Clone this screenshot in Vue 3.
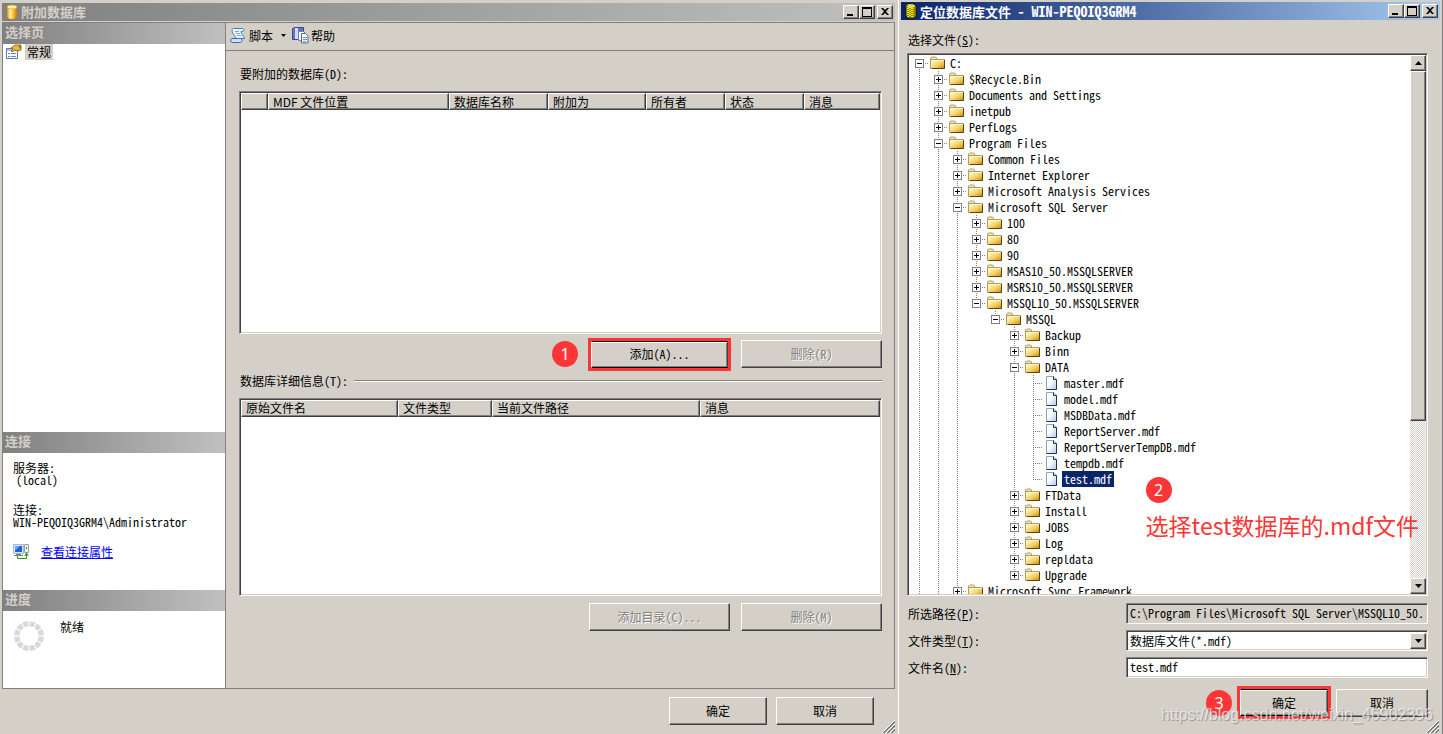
<script setup>
import { ref } from 'vue'

const attachColumns = [
  { label: '', width: 27 },
  { label: 'MDF 文件位置', width: 181, proportional: true },
  { label: '数据库名称', width: 99 },
  { label: '附加为', width: 98 },
  { label: '所有者', width: 79 },
  { label: '状态', width: 79 },
  { label: '消息', width: 76 },
]
const detailColumns = [
  { label: '原始文件名', width: 157 },
  { label: '文件类型', width: 94 },
  { label: '当前文件路径', width: 208 },
  { label: '消息', width: 180 },
]
const share = (cols, col) => (100 * col.width) / cols.reduce((sum, c) => sum + c.width, 0) + '%'

// [level, name, kind]: '+' closed folder, '-' open folder, 'f' file
const entries = [
  [0, 'C:', '-'],
  [1, '$Recycle.Bin', '+'],
  [1, 'Documents and Settings', '+'],
  [1, 'inetpub', '+'],
  [1, 'PerfLogs', '+'],
  [1, 'Program Files', '-'],
  [2, 'Common Files', '+'],
  [2, 'Internet Explorer', '+'],
  [2, 'Microsoft Analysis Services', '+'],
  [2, 'Microsoft SQL Server', '-'],
  [3, '100', '+'],
  [3, '80', '+'],
  [3, '90', '+'],
  [3, 'MSAS10_50.MSSQLSERVER', '+'],
  [3, 'MSRS10_50.MSSQLSERVER', '+'],
  [3, 'MSSQL10_50.MSSQLSERVER', '-'],
  [4, 'MSSQL', '-'],
  [5, 'Backup', '+'],
  [5, 'Binn', '+'],
  [5, 'DATA', '-'],
  [6, 'master.mdf', 'f'],
  [6, 'model.mdf', 'f'],
  [6, 'MSDBData.mdf', 'f'],
  [6, 'ReportServer.mdf', 'f'],
  [6, 'ReportServerTempDB.mdf', 'f'],
  [6, 'tempdb.mdf', 'f'],
  [6, 'test.mdf', 'f'],
  [5, 'FTData', '+'],
  [5, 'Install', '+'],
  [5, 'JOBS', '+'],
  [5, 'Log', '+'],
  [5, 'repldata', '+'],
  [5, 'Upgrade', '+'],
  [2, 'Microsoft Sync Framework', '+'],
]

// The outer three levels have further siblings below the visible part.
const continues = (index, level) => {
  if (level <= 2) return true
  for (let i = index + 1; i < entries.length; i++) {
    if (entries[i][0] < level) return false
    if (entries[i][0] === level) return true
  }
  return false
}
const rows = entries.map(([level, name, kind], index) => ({
  name,
  kind,
  first: index === 0,
  guides: Array.from({ length: level }, (_, l) => continues(index, l)),
  more: continues(index, level),
}))

const selected = ref('test.mdf')
const selectedPath = ref('C:\\Program Files\\Microsoft SQL Server\\MSSQL10_50.MSSQLSERVER\\MSSQL\\DATA')
const spokes = Array.from({ length: 12 }, (_, i) => i * 30 + 15)
</script>

<template>
  <div class="desktop">
    <section class="window attach">
      <header class="titlebar inactive">
        <svg class="title-icon" width="16" height="16" viewBox="0 0 16 16" aria-hidden="true">
          <defs>
            <linearGradient id="drum" x1="0" x2="1">
              <stop offset="0" stop-color="#e89a10" /><stop offset=".35" stop-color="#fff3a8" />
              <stop offset=".6" stop-color="#f8c53a" /><stop offset="1" stop-color="#c87808" />
            </linearGradient>
          </defs>
          <path d="M3 3v10c0 3 10 3 10 0V3z" fill="url(#drum)" stroke="#c08418" stroke-width=".7" />
          <ellipse cx="8" cy="3" rx="5" ry="2" fill="#fff0a0" stroke="#d8a030" stroke-width=".7" />
        </svg>
        <h1>附加数据库</h1>
        <div class="caption">
          <button aria-label="最小化"><svg width="12" height="10"><path d="M2 7h6v2h-6z" /></svg></button>
          <button aria-label="最大化"><svg width="12" height="10"><path d="M1 0h10v10H1zM2 2v7h8V2z" fill-rule="evenodd" /></svg></button>
          <button class="close" aria-label="关闭"><svg width="12" height="10"><path d="M2 1h2l2 2 2-2h2L7 4.500 10 8H8L6 6 4 8H2l3-3.500z" /></svg></button>
        </div>
      </header>

      <div class="frame">
        <aside>
          <h2>选择页</h2>
          <div class="pages">
            <a class="page" href="#">
              <svg width="17" height="16" viewBox="0 0 17 16" aria-hidden="true">
                <path d="M.5 4.500h11v10H.5z" fill="#fff" stroke="#5b78b8" />
                <path d="M1 5h10v2H1z" fill="#a9c0ec" />
                <path d="M2 9.500h2M5 9.500h5M2 12.500h2M5 12.500h5" stroke="#6a7fc0" />
                <path d="M5 4l4-3 6 0v5l-4 1-2-1-3 2-1-1 2-2z" fill="#eeb638" stroke="#7d5a12" stroke-width=".8" />
                <path d="M12 2h3v3z" fill="#5c7e34" />
              </svg>
              <span>常规</span>
            </a>
          </div>
          <h2>连接</h2>
          <div class="connection">
            <dl>
              <dt>服务器:</dt>
              <dd class="server">(local)</dd>
              <dt>连接:</dt>
              <dd>WIN-PEQOIQ3GRM4\Administrator</dd>
            </dl>
            <div class="link-row">
              <svg width="17" height="17" viewBox="0 0 17 17" aria-hidden="true">
                <path d="M.5.5h10v9H.5z" fill="#d9e4f6" stroke="#a8b8d4" />
                <path d="M2 2h7v6H2z" fill="#1c62dc" /><path d="M2 2h5L3 6H2z" fill="#65a4f7" />
                <path d="M3 10h5v1h2v1H1v-1h2z" fill="#71809c" />
                <path d="M11.500.5h4v8h-4z" fill="#f0f0f0" stroke="#9a9ea8" /><path d="M13 3h1v2h-1z" fill="#68707c" />
                <path d="M4.500 12v2.500h9V10" fill="none" stroke="#2c9a12" />
                <path d="M11 11.500L13.500 8.500 16 11.500z" fill="#2c9a12" />
              </svg>
              <a href="#">查看连接属性</a>
            </div>
          </div>
          <h2>进度</h2>
          <div class="progress">
            <svg width="30" height="30" viewBox="-15 -15 30 30" aria-hidden="true">
              <path v-for="a in spokes" :key="a" :transform="`rotate(${a})`" d="M-3.200 -14.500Q0 -15.500 3.200 -14.500L2 -9.500H-2z" fill="#d8d8d8" />
            </svg>
            <span>就绪</span>
          </div>
        </aside>

        <main>
          <div class="toolbar">
            <button>
              <svg width="17" height="17" viewBox="0 0 17 17" aria-hidden="true">
                <path d="M3.500 1.500h9c2 0 2 3 0 3h-1.500c0 3 3 4 3.500 7H6C5 8 2 7 2 3.500c0-1 .5-2 1.500-2z" fill="#eaf3fd" stroke="#4a78b4" />
                <path d="M1.500 11.500h9c2 0 2 4 0 4h-8c-2 0-2.500-3-1-4z" fill="#cfe1f6" stroke="#3c68a8" />
                <path d="M5 4.500h4M6 6.500h4M7 8.500h4" stroke="#7ca6d8" />
              </svg>
              <span>脚本</span>
              <svg class="drop" width="5" height="3"><path d="M0 0h5L2.500 3z" /></svg>
            </button>
            <button>
              <svg width="17" height="17" viewBox="0 0 17 17" aria-hidden="true">
                <path d="M.5 1.500l2-1h9v11l-2 1h-9z" fill="#6670c4" stroke="#3e468e" />
                <path d="M3 1h3v11H3z" fill="#d5daf6" />
                <path d="M6.500 4.500h5l2 2v7h-7z" fill="#fff" stroke="#7080a8" />
                <path d="M9.500 6.500h4l2.500 2.500v7H9.500z" fill="#fff" stroke="#506898" />
                <path d="M11 10.500h4M11 12.500h4M11 14.500h3" stroke="#6a92d0" />
              </svg>
              <span>帮助</span>
            </button>
          </div>

          <div class="content">
            <div id="attach-label" class="label">要附加的数据库(D):</div>
            <div class="grid-box tall">
              <table aria-labelledby="attach-label">
                <colgroup><col v-for="(c, i) in attachColumns" :key="i" :style="{ width: share(attachColumns, c) }" /></colgroup>
                <thead>
                  <tr><th v-for="(c, i) in attachColumns" :key="i" scope="col" :class="{ proportional: c.proportional }">{{ c.label }}</th></tr>
                </thead>
              </table>
            </div>
            <div class="actions marked">
              <span class="badge">1</span>
              <span class="highlight"><button class="btn default wide">添加(A)...</button></span>
              <button class="btn wide" disabled>删除(R)</button>
            </div>
            <div class="label ruled"><span id="detail-label">数据库详细信息(T):</span></div>
            <div class="grid-box short">
              <table aria-labelledby="detail-label">
                <colgroup><col v-for="(c, i) in detailColumns" :key="i" :style="{ width: share(detailColumns, c) }" /></colgroup>
                <thead>
                  <tr><th v-for="(c, i) in detailColumns" :key="i" scope="col">{{ c.label }}</th></tr>
                </thead>
              </table>
            </div>
            <div class="actions lower">
              <button class="btn wide" disabled>添加目录(C)...</button>
              <button class="btn wide" disabled>删除(M)</button>
            </div>
          </div>
        </main>
      </div>

      <footer>
        <button class="btn">确定</button>
        <button class="btn">取消</button>
      </footer>
      <svg class="grip" width="13" height="13" viewBox="0 0 13 13" aria-hidden="true">
        <path d="M0 13L13 0M4 13l9-9M8 13l5-5" stroke="#fff" stroke-width="1" />
        <path d="M1 13L13 1M2 13L13 2M5 13l8-8M6 13l7-7M9 13l4-4M10 13l3-3" stroke="#707070" stroke-width=".9" />
      </svg>
    </section>

    <section class="window locate">
      <header class="titlebar active">
        <svg class="title-icon" width="16" height="16" viewBox="0 0 16 16" aria-hidden="true">
          <path d="M4 1h7l2 2v10l-2 2H5l-2-2V2z" fill="#f4e800" stroke="#111" />
          <path d="M5 2v12M7 3v12M9 2v12" stroke="#222" stroke-dasharray="1 1" />
          <path d="M11 4v10M12 3v10" stroke="#6c6800" />
          <path d="M5 2h5M5 4h5" stroke="#fffbb0" />
        </svg>
        <h1>定位数据库文件 <span class="host">- WIN-PEQOIQ3GRM4</span></h1>
        <div class="caption">
          <button aria-label="最小化"><svg width="12" height="10"><path d="M2 7h6v2h-6z" /></svg></button>
          <button aria-label="最大化"><svg width="12" height="10"><path d="M1 0h10v10H1zM2 2v7h8V2z" fill-rule="evenodd" /></svg></button>
          <button class="close" aria-label="关闭"><svg width="12" height="10"><path d="M2 1h2l2 2 2-2h2L7 4.500 10 8H8L6 6 4 8H2l3-3.500z" /></svg></button>
        </div>
      </header>

      <div class="picker">
        <div id="tree-label" class="label">选择文件(<u>S</u>):</div>
        <div class="tree-box">
          <ul class="tree" role="tree" aria-labelledby="tree-label">
            <li v-for="row in rows" :key="row.name" role="treeitem" :aria-selected="row.name === selected" @click="selected = row.name">
              <svg v-for="(g, i) in row.guides" :key="i" width="19" height="16" aria-hidden="true">
                <path v-if="g" class="dots" d="M9.500 0v16" />
              </svg>
              <svg width="19" height="16" aria-hidden="true">
                <path v-if="!row.first" class="dots" d="M9.500 0v9" />
                <path v-if="row.more" class="dots" d="M9.500 8v8" />
                <path class="dots" d="M9 8.500h10" />
                <template v-if="row.kind !== 'f'">
                  <rect x="5.500" y="4.500" width="8" height="8" fill="#fff" stroke="#808080" />
                  <path d="M7 8.500h5" stroke="#000" />
                  <path v-if="row.kind === '+'" d="M9.500 6v5" stroke="#000" />
                </template>
              </svg>
              <svg v-if="row.kind !== 'f'" class="glyph" width="16" height="16" viewBox="0 0 16 16" aria-hidden="true">
                <path d="M.5 4.500V3l1-1h4l1 1v1.500z" fill="#f6e6a4" stroke="#b09c68" />
                <path d="M.5 4.500h14v9H.5z" fill="url(#folder)" stroke="#b09c68" />
                <path d="M1 5.500h13" stroke="#fff6c0" />
                <path d="M14.500 5v8.500H2" fill="none" stroke="#5a420c" />
              </svg>
              <svg v-else class="glyph" width="16" height="16" viewBox="0 0 16 16" aria-hidden="true">
                <path d="M2.500 1.500h7l3 3v10h-10z" fill="url(#sheet)" stroke="#8aa0c4" />
                <path d="M9.500 1.500v3h3v10h-10" fill="none" stroke="#1d3358" />
              </svg>
              <span class="name">{{ row.name }}</span>
            </li>
          </ul>
          <div class="scrollbar">
            <button class="arrow" aria-label="向上滚动"><svg width="7" height="4"><path d="M0 4h7L3.500 0z" /></svg></button>
            <div class="thumb"></div>
            <div class="track"></div>
            <button class="arrow" aria-label="向下滚动"><svg width="7" height="4"><path d="M0 0h7L3.500 4z" /></svg></button>
          </div>
          <div class="note">
            <span class="badge">2</span>
            <p>选择test数据库的.mdf文件</p>
          </div>
        </div>

        <div class="fields">
          <label for="path">所选路径(<u>P</u>):</label>
          <input id="path" class="field readonly" type="text" readonly :value="selectedPath" />
          <label for="kind">文件类型(<u>T</u>):</label>
          <div class="field combo">
            <select id="kind"><option>数据库文件(*.mdf)</option></select>
            <span class="arrow" aria-hidden="true"><svg width="7" height="4"><path d="M0 0h7L3.500 4z" /></svg></span>
          </div>
          <label for="name">文件名(<u>N</u>):</label>
          <input id="name" v-model="selected" class="field" type="text" />
        </div>

        <div class="confirm">
          <span class="badge">3</span>
          <span class="highlight"><button class="btn default">确定</button></span>
          <button class="btn">取消</button>
        </div>
      </div>
      <svg class="grip" width="13" height="13" viewBox="0 0 13 13" aria-hidden="true">
        <path d="M0 13L13 0M4 13l9-9M8 13l5-5" stroke="#fff" stroke-width="1" />
        <path d="M1 13L13 1M2 13L13 2M5 13l8-8M6 13l7-7M9 13l4-4M10 13l3-3" stroke="#707070" stroke-width=".9" />
      </svg>
      <div class="watermark">https://blog.csdn.net/weixin_46902396</div>
    </section>

    <svg class="defs" width="0" height="0" aria-hidden="true">
      <defs>
        <linearGradient id="folder" x1="0" y1="0" x2="1" y2="1">
          <stop offset=".2" stop-color="#fff3b4" /><stop offset=".6" stop-color="#f2cd60" /><stop offset="1" stop-color="#c98708" />
        </linearGradient>
        <linearGradient id="sheet" x1="0" y1="0" x2="1" y2="1">
          <stop offset=".4" stop-color="#fff" /><stop offset="1" stop-color="#b4c6e4" />
        </linearGradient>
      </defs>
    </svg>
  </div>
</template>

<style>
body {
  background: #d4d0c8;
}
</style>

<style scoped>
.desktop {
  display: grid;
  grid-template-columns: minmax(0, 898fr) minmax(0, 545fr);
  height: 100vh;
  overflow: hidden;
  background: #d4d0c8;
  color: #000;
  font-family: "Noto Sans CJK SC", "Liberation Sans", sans-serif;
  font-size: 12px;
  line-height: 16px;
  font-feature-settings: "hwid" 1;
}
.desktop * {
  box-sizing: border-box;
}
button,
input,
select {
  margin: 0;
  padding: 0;
  border: 0;
  border-radius: 0;
  background: none;
  color: inherit;
  font: inherit;
  font-feature-settings: "hwid" 1;
}
h1,
h2,
p,
dl,
dd,
ul {
  margin: 0;
  padding: 0;
}
svg {
  display: block;
  flex: none;
}
.defs {
  position: absolute;
}
.window {
  position: relative;
  display: flex;
  flex-direction: column;
  min-width: 0;
  min-height: 0;
}
.attach {
  padding: 3px 3px 0 2px;
}
.locate {
  padding: 2px 2px 0;
  border-left: 1px solid #fff;
  border-right: 1px solid #808080;
}

.titlebar {
  display: flex;
  align-items: center;
  flex: none;
  height: 18px;
  padding: 0 2px;
}
.titlebar.inactive {
  margin-bottom: 1px;
  background: linear-gradient(90deg, #808080, #c0c0c0);
  color: #d4d0c8;
}
.titlebar.active {
  background: linear-gradient(90deg, #0a246a, #a6caf0);
  color: #fff;
}
.title-icon {
  margin-right: 1px;
}
h1 {
  flex: 1;
  font-size: 13px;
  font-weight: 700;
  line-height: 18px;
  white-space: nowrap;
}
.host {
  font-size: 14px;
}
.caption {
  display: flex;
}
.caption button {
  display: grid;
  place-items: center;
  width: 16px;
  height: 14px;
}
.caption .close {
  margin-left: 2px;
}
.caption button,
.btn,
.arrow,
.thumb {
  background: #d4d0c8;
  border: 1px solid;
  border-color: #fff #404040 #404040 #fff;
  box-shadow: inset -1px -1px #808080;
}

.frame {
  display: flex;
  flex: 1;
  min-height: 0;
  border: 1px solid #808080;
}
aside {
  display: flex;
  flex-direction: column;
  flex: none;
  width: 223px;
  background: #fff;
  border-right: 1px solid #808080;
}
h2 {
  height: 21px;
  padding-left: 2px;
  background: linear-gradient(90deg, #808080, #c0c0c0);
  color: #d4d0c8;
  font-size: 13px;
  font-weight: 700;
  line-height: 18px;
}
.pages {
  flex: 1;
}
.page {
  display: flex;
  gap: 2px;
  padding: 0 3px;
  color: inherit;
  text-decoration: none;
}
.page span {
  padding: 0 2px;
  background: #d4d0c8;
}
.connection {
  height: 137px;
  padding: 9px 10px 0;
}
dt,
dd {
  line-height: 12px;
}
.server {
  margin-bottom: 18px;
  padding-left: 3px;
}
.link-row {
  display: flex;
  gap: 11px;
  margin-top: 16px;
}
.link-row a {
  color: #00f;
}
.progress {
  display: flex;
  gap: 16px;
  height: 77px;
  padding: 8px 11px;
}
.progress svg {
  margin-top: 2px;
}

main {
  display: flex;
  flex: 1;
  flex-direction: column;
  min-width: 0;
}
.toolbar {
  display: flex;
  gap: 6px;
  flex: none;
  height: 28px;
  padding: 0 4px 2px;
  border-bottom: 1px solid #808080;
}
.toolbar button {
  display: flex;
  align-items: center;
  gap: 2px;
}
.drop {
  margin-left: 6px;
}
.content {
  display: flex;
  flex: 1;
  flex-direction: column;
  padding: 15px 12px 57px 13px;
}
.label {
  padding-left: 1px;
}
.grid-box {
  min-height: 0;
  margin-top: 9px;
  background: #fff;
  border: 1px solid;
  border-color: #808080 #fff #fff #808080;
  box-shadow: inset 1px 1px #404040, inset -1px -1px #d4d0c8;
  padding: 1px;
}
.tall {
  flex: 243 1 0;
}
.short {
  flex: 198 1 0;
}
table {
  width: 100%;
  table-layout: fixed;
  border-collapse: separate;
  border-spacing: 0;
}
th {
  height: 17px;
  padding: 0 4px;
  background: #d4d0c8;
  border: 1px solid;
  border-color: #fff #404040 #404040 #fff;
  box-shadow: inset -1px -1px #808080;
  font-weight: 400;
  line-height: 14px;
  text-align: left;
  white-space: nowrap;
}
.proportional {
  font-feature-settings: normal;
}
.actions,
.confirm {
  display: flex;
  align-items: center;
  justify-content: flex-end;
}
.marked {
  gap: 10px;
  margin: 4px 0 2px;
}
.lower {
  gap: 11px;
  margin-top: 7px;
}
.btn {
  width: 98px;
  height: 28px;
}
.btn.wide {
  width: 141px;
}
.btn:disabled {
  color: #808080;
  text-shadow: 1px 1px #fff;
}
.highlight {
  display: flex;
  border: 3px solid #fc3636;
}
.btn.default {
  height: 27px;
  border-color: #000 #404040 #000 #fff;
  box-shadow: inset 0 1px #fff, inset -1px -1px #808080;
}
.highlight .wide {
  width: 137px;
}
.badge {
  display: grid;
  place-items: center;
  width: 26px;
  height: 26px;
  border-radius: 50%;
  background: #fc3636;
  color: #fff;
  font-family: "Noto Sans", sans-serif;
  font-size: 16px;
  font-feature-settings: normal;
}
.ruled {
  display: flex;
  align-items: center;
  gap: 6px;
}
.ruled::after {
  content: "";
  flex: 1;
  height: 1px;
  background: #808080;
  box-shadow: 0 1px #fff;
}
footer {
  display: flex;
  justify-content: flex-end;
  gap: 9px;
  padding: 8px 21px;
}
footer .btn {
  margin-bottom: 1px;
}
.grip {
  position: absolute;
  right: 3px;
  bottom: 1px;
}

.picker {
  display: flex;
  flex: 1;
  flex-direction: column;
  min-height: 0;
  padding: 12px 12px 15px 6px;
}
.tree-box {
  position: relative;
  display: flex;
  flex: 1;
  min-height: 0;
  margin-top: 5px;
  padding: 1px;
  background: #fff;
  border: 1px solid;
  border-color: #808080 #fff #fff #808080;
  box-shadow: inset 1px 1px #404040, inset -1px -1px #d4d0c8;
}
.tree {
  flex: 1;
  padding-left: 1px;
  overflow: hidden;
  list-style: none;
}
.tree li {
  display: flex;
  height: 16px;
  white-space: nowrap;
}
.dots {
  stroke: #808080;
  stroke-dasharray: 1 1;
}
.glyph {
  margin: 0 2px 0 1px;
}
.name {
  padding: 0 2px;
}
.tree [aria-selected="true"] .name {
  background: #0a246a;
  color: #fff;
}
.scrollbar {
  display: flex;
  flex-direction: column;
  width: 16px;
}
.arrow {
  display: grid;
  place-items: center;
  flex: none;
  width: 16px;
  height: 16px;
}
.thumb {
  flex: 349 1 0;
}
.track {
  flex: 158 1 0;
  background: repeating-conic-gradient(#fff 0 25%, #d4d0c8 0 50%) 0 0 / 2px 2px;
}
.note {
  position: absolute;
  right: 8px;
  bottom: 53px;
  color: #fc3636;
  font-feature-settings: normal;
}
.note p {
  margin-top: 5px;
  font-size: 23px;
  line-height: 34px;
  white-space: nowrap;
}

.fields {
  display: grid;
  grid-template-columns: 219px 1fr;
  align-items: center;
  gap: 6px 0;
  margin-top: 7px;
}
.fields label {
  padding-left: 1px;
}
.field {
  width: 100%;
  height: 21px;
  padding: 0 3px 2px;
  background: #fff;
  border: 1px solid;
  border-color: #808080 #fff #fff #808080;
  box-shadow: inset 1px 1px #404040, inset -1px -1px #d4d0c8;
  outline: 0;
}
.readonly {
  background: #d4d0c8;
}
.combo {
  display: flex;
  align-items: center;
  padding: 1px 1px 1px 3px;
}
.combo select {
  flex: 1;
  appearance: none;
  outline: 0;
}
.confirm {
  gap: 5px;
  margin-top: 8px;
}
.confirm .btn {
  width: 92px;
}
.confirm .default {
  width: 88px;
}
.watermark {
  position: absolute;
  right: 9px;
  bottom: 10px;
  color: rgba(240, 240, 240, 0.75);
  font-family: "Liberation Sans", Arial, sans-serif;
  font-size: 16px;
  font-feature-settings: normal;
  line-height: 18px;
  text-shadow: 1px 1px 1px rgba(90, 90, 90, 0.5);
  white-space: nowrap;
  pointer-events: none;
}
</style>
